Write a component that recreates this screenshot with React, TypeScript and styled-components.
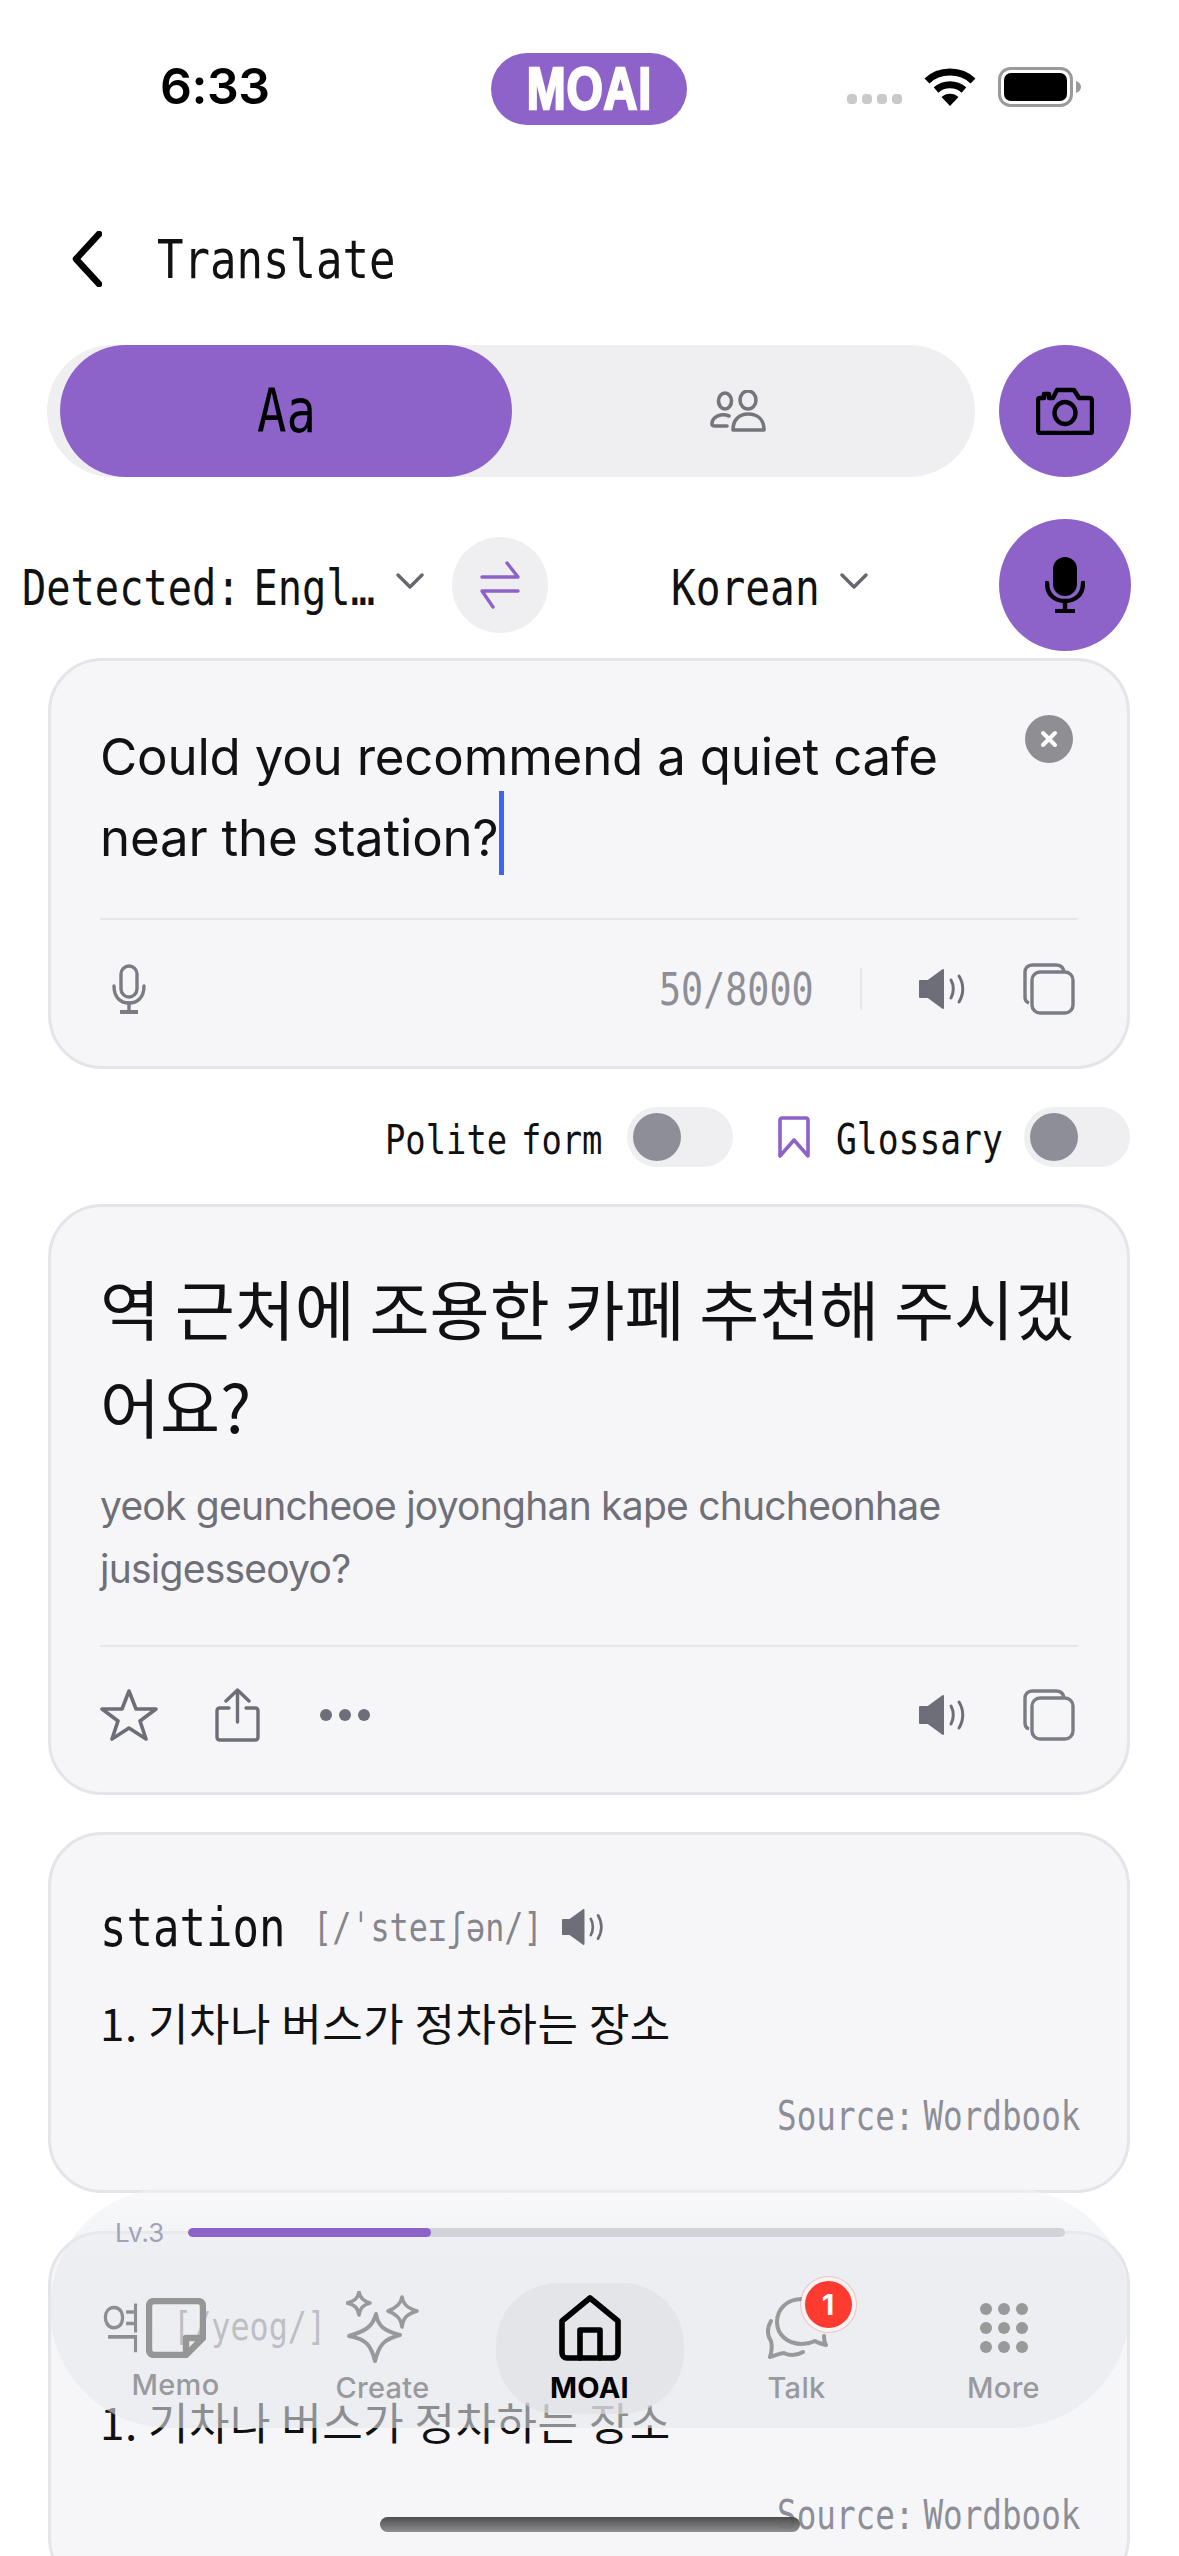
import React from "react";
import styled, { createGlobalStyle } from "styled-components";

const PURPLE = "#8D63C9";
const MONO = `"DejaVu Sans Mono", "Liberation Mono", monospace`;
const SANS = `Inter, "Noto Sans CJK KR", sans-serif`;
const KO = `"Noto Sans CJK KR", sans-serif`;

const Global = createGlobalStyle`
  html, body { margin: 0; padding: 0; background: #fff; }
  * { box-sizing: border-box; }
`;

const Screen = styled.div`
  position: relative;
  width: 1179px;
  height: 2556px;
  overflow: hidden;
  background: #fff;
  font-family: ${SANS};
  color: #111;
`;

const Narrow = styled.span<{ $w: number; $size: number; $color?: string; $space?: number; $down?: number }>`
  display: inline-block;
  flex: none;
  width: ${(p) => p.$w}px;
  margin-top: ${(p) => p.$down ?? 0}px;
  font-family: ${MONO};
  font-size: ${(p) => p.$size}px;
  word-spacing: ${(p) => p.$space ?? 0}px;
  color: ${(p) => p.$color ?? "#111"};
  white-space: nowrap;
  & > span {
    display: inline-block;
    transform: scaleX(0.815);
    transform-origin: left center;
  }
`;

const StatusBar = styled.div`
  height: 178px;
  display: flex;
  align-items: center;
  padding: 0 97px 0 160px;
`;
const Time = styled.span`
  width: 331px;
  font-family: Inter, sans-serif;
  font-weight: 600;
  font-size: 50px;
  letter-spacing: -0.5px;
  color: #000;
  margin-top: -6px;
`;
const LogoPill = styled.div`
  width: 196px;
  height: 72px;
  border-radius: 36px;
  background: ${PURPLE};
  display: flex;
  align-items: center;
  justify-content: center;
`;
const LogoText = styled.span`
  font-family: "Liberation Sans", sans-serif;
  font-weight: 700;
  font-size: 60px;
  line-height: 1;
  letter-spacing: 1px;
  color: #fff;
  -webkit-text-stroke: 2.5px #fff;
  transform: scaleX(0.78);
`;
const StatusRight = styled.div`
  margin-left: auto;
  display: flex;
  align-items: center;
  gap: 22px;
  margin-top: -4px;
`;
const Signal = styled.div`
  display: flex;
  gap: 5px;
  margin-top: 24px;
`;
const SignalDot = styled.i`
  width: 10px;
  height: 10px;
  border-radius: 4px;
  background: #c9c9c9;
`;

const Header = styled.div`
  height: 162px;
  display: flex;
  align-items: center;
  gap: 55px;
  padding-left: 72px;
`;

const TabRow = styled.div`
  margin-top: 5px;
  display: flex;
  gap: 24px;
  padding: 0 48px 0 47px;
`;
const Segment = styled.div`
  flex: 1;
  height: 132px;
  border-radius: 66px;
  background: #efeff1;
  padding-left: 13px;
  display: flex;
`;
const SegmentActive = styled.div`
  width: 452px;
  border-radius: 66px;
  background: ${PURPLE};
  display: flex;
  align-items: center;
  justify-content: center;
`;
const SegmentOther = styled.div`
  flex: 1;
  display: flex;
  align-items: center;
  justify-content: center;
  padding-right: 12px;
`;
const RoundAction = styled.div`
  flex: none;
  width: 132px;
  height: 132px;
  border-radius: 50%;
  background: ${PURPLE};
  display: flex;
  align-items: center;
  justify-content: center;
`;

const LangRow = styled.div`
  margin-top: 42px;
  height: 132px;
  display: flex;
  align-items: center;
  padding: 0 48px 0 22px;
`;
const LangChevron = styled.span<{ $ml: number }>`
  display: flex;
  margin-left: ${(p) => p.$ml}px;
  margin-top: -8px;
`;
const SwapCircle = styled.div`
  width: 96px;
  height: 96px;
  border-radius: 50%;
  background: #efeff1;
  margin-left: 28px;
  margin-right: 123px;
  display: flex;
  align-items: center;
  justify-content: center;
`;
const LangEnd = styled.div`
  margin-left: auto;
`;

const Cards = styled.div`
  padding: 0 49px 0 48px;
`;
const Card = styled.div<{ $mt: number; $pb?: number }>`
  position: relative;
  margin-top: ${(p) => p.$mt}px;
  border: 3px solid #e4e4e9;
  border-radius: 54px;
  background: #f6f6f9;
  padding: 0 49px ${(p) => p.$pb ?? 0}px;
`;
const InputText = styled.div`
  padding-top: 55px;
  width: 900px;
  font-size: 51px;
  letter-spacing: -0.2px;
  line-height: 81px;
  color: #111;
`;
const Caret = styled.i`
  display: inline-block;
  width: 5px;
  height: 84px;
  vertical-align: middle;
  margin: -10px 0 -10px 1px;
  transform: translateY(-9px);
  background: #3b66f0;
`;
const ClearButton = styled.div`
  position: absolute;
  top: 54px;
  right: 54px;
  width: 48px;
  height: 48px;
  border-radius: 50%;
  background: #8e8e93;
  display: flex;
  align-items: center;
  justify-content: center;
`;
const Divider = styled.div<{ $mt: number }>`
  margin-top: ${(p) => p.$mt}px;
  height: 2px;
  background: #e7e7eb;
`;
const ToolRow = styled.div<{ $h: number }>`
  height: ${(p) => p.$h}px;
  display: flex;
  align-items: center;
  padding-right: 3px;
`;
const ToolSlot = styled.span<{ $ml?: number }>`
  display: flex;
  flex: none;
  margin-left: ${(p) => p.$ml ?? 0}px;
`;
const ToolEnd = styled.span`
  margin-left: auto;
  display: flex;
  align-items: center;
`;
const VRule = styled.i`
  width: 2px;
  height: 42px;
  margin-left: 44px;
  background: #e7e7eb;
`;

const ToggleRow = styled.div`
  margin-top: 38px;
  height: 60px;
  display: flex;
  align-items: center;
  justify-content: flex-end;
`;
const Toggle = styled.div<{ $ml: number }>`
  width: 106px;
  height: 60px;
  margin-left: ${(p) => p.$ml}px;
  border-radius: 30px;
  background: #efeff1;
  padding: 6px;
`;
const Thumb = styled.div`
  width: 48px;
  height: 48px;
  border-radius: 50%;
  background: #8e8e98;
`;

const Korean = styled.div`
  padding-top: 51px;
  font-family: ${KO};
  font-size: 65.3px;
  line-height: 98px;
  font-weight: 400;
  color: #111;
  white-space: nowrap;
`;
const Roman = styled.div`
  margin-top: 20px;
  font-size: 39px;
  letter-spacing: -0.76px;
  line-height: 63px;
  color: #6f6f78;
  white-space: nowrap;
`;

const WordRow = styled.div`
  padding-top: 60px;
  height: 124px;
  display: flex;
  align-items: center;
`;
const Definition = styled.div`
  margin-top: 33px;
  height: 60px;
  font-family: ${KO};
  font-size: 44px;
  letter-spacing: 0.5px;
  line-height: 60px;
  color: #111;
  white-space: nowrap;
`;
const SourceLine = styled.div`
  margin-top: 39px;
  height: 50px;
  margin-bottom: 49px;
  line-height: 50px;
  display: flex;
  justify-content: flex-end;
`;

const Nav = styled.nav`
  position: absolute;
  left: 50px;
  top: 2188px;
  width: 1080px;
  height: 240px;
  border-radius: 120px;
  background: linear-gradient(180deg, rgba(244, 244, 246, 0.55), rgba(230, 232, 236, 0.58) 30%);
  padding: 40px 23px 0 22px;
`;
const LevelRow = styled.div`
  display: flex;
  align-items: center;
  height: 9px;
  padding-left: 43px;
  padding-right: 42px;
`;
const LevelLabel = styled.span`
  width: 73px;
  flex: none;
  font-size: 26px;
  color: #a0a3b4;
`;
const Track = styled.div`
  flex: 1;
  height: 9px;
  border-radius: 5px;
  background: #d2d2d9;
  overflow: hidden;
`;
const Fill = styled.div`
  height: 100%;
  border-radius: 5px;
  background: ${PURPLE};
`;
const NavItems = styled.div`
  margin-top: 46px;
  display: grid;
  grid-template-columns: repeat(5, 1fr);
`;
const NavItem = styled.div<{ $active?: boolean }>`
  position: relative;
  justify-self: center;
  width: 188px;
  height: 131px;
  padding-top: 5px;
  border-radius: 62px;
  background: ${(p) => (p.$active ? "rgba(222, 223, 228, 0.62)" : "transparent")};
  display: flex;
  flex-direction: column;
  align-items: center;
`;
const NavIcon = styled.div`
  position: relative;
  height: 80px;
  display: flex;
  align-items: center;
  justify-content: center;
`;
const NavLabel = styled.span<{ $active?: boolean; $up?: number }>`
  height: 40px;
  line-height: 40px;
  margin-top: ${(p) => -(p.$up ?? 0)}px;
  font-size: 29px;
  letter-spacing: 0.3px;
  font-weight: ${(p) => (p.$active ? 700 : 500)};
  color: ${(p) => (p.$active ? "#000" : "#999a9d")};
`;
const Badge = styled.span`
  position: absolute;
  top: -7px;
  left: 39px;
  width: 47px;
  height: 47px;
  border-radius: 50%;
  background: #ff3b30;
  box-shadow: 0 0 0 4px #f4f4f6, 0 0 0 5px rgba(255, 59, 48, 0.25);
  color: #fff;
  font-size: 29px;
  font-weight: 700;
  display: flex;
  align-items: center;
  justify-content: center;
`;
const HomeBar = styled.div`
  position: absolute;
  left: 380px;
  top: 2517px;
  width: 420px;
  height: 15px;
  border-radius: 8px;
  background: linear-gradient(180deg, #444, #8a8a8a);
  opacity: 0.95;
`;

type TProps = { w: number; size: number; color?: string; space?: number; down?: number; children: React.ReactNode };
const T = ({ w, size, color, space, down, children }: TProps) => (
  <Narrow $w={w} $size={size} $color={color} $space={space} $down={down}>
    <span>{children}</span>
  </Narrow>
);

const Wifi = () => (
  <svg width="52" height="40" viewBox="0 0 52 40" fill="none" stroke="#000" strokeWidth="7">
    <path d="M3 14C15 2 37 2 49 14" />
    <path d="M12 23C20 16 32 16 40 23" />
    <path d="M26 39L17.5 30C22 25.5 30 25.5 34.5 30Z" fill="#000" stroke="none" />
  </svg>
);
const Battery = () => (
  <svg width="84" height="40" viewBox="0 0 84 40" fill="none">
    <rect x="1.5" y="1.5" width="72" height="37" rx="11" stroke="#9a9a9a" strokeWidth="3" />
    <rect x="6" y="6" width="63" height="28" rx="7" fill="#000" />
    <path d="M78 14c3 1 5 3 5 6s-2 5-5 6z" fill="#9a9a9a" />
  </svg>
);
const Back = () => (
  <svg width="30" height="56" viewBox="0 0 30 56" fill="none" stroke="#000" strokeWidth="6.5" strokeLinecap="round" strokeLinejoin="round">
    <path d="M27 3L4 28L27 53" />
  </svg>
);
const People = () => (
  <svg width="58" height="42" viewBox="0 0 58 42" fill="none" stroke="#75757d" strokeWidth="3.6" strokeLinecap="round" strokeLinejoin="round">
    <ellipse cx="16" cy="11" rx="6.5" ry="8" />
    <ellipse cx="39" cy="10" rx="8" ry="9" />
    <path d="M24 40C24 30 30 24 39 24C49 24 55 30 55 40Z" />
    <path d="M20 26C13 23 3 26 3 34C3 36 4 36 6 36H18" />
  </svg>
);
const Camera = () => (
  <svg width="58" height="48" viewBox="0 0 58 48" fill="none" stroke="#000" strokeWidth="4.4" strokeLinecap="round" strokeLinejoin="round">
    <path d="M4 46H54C55.5 46 56 45 56 44V14C56 12 55 11 53 11H43L38 3H21L17 11H13V7H8V11H4C3 11 2 12 2 14V44C2 45 3 46 4 46Z" />
    <ellipse cx="29" cy="26" rx="10.5" ry="11" />
  </svg>
);
const MicSolid = () => (
  <svg width="40" height="56" viewBox="0 0 40 56" fill="none" stroke="#000" strokeWidth="4.4" strokeLinecap="round">
    <rect x="8" y="0" width="24" height="39" rx="12" fill="#000" stroke="none" />
    <path d="M2 26C2 38 10 44 20 44C30 44 38 38 38 26" />
    <path d="M20 44V53" />
    <path d="M10 54H30" strokeLinecap="butt" strokeWidth="4" />
  </svg>
);
const Swap = () => (
  <svg width="40" height="48" viewBox="0 0 40 48" fill="none" stroke="#8D63C9" strokeWidth="3.4" strokeLinecap="round" strokeLinejoin="round">
    <path d="M2 16H38L27 2" />
    <path d="M38 30H2L13 46" />
  </svg>
);
const Chevron = () => (
  <svg width="28" height="16" viewBox="0 0 28 16" fill="none" stroke="#67676f" strokeWidth="3.4" strokeLinecap="round" strokeLinejoin="round">
    <path d="M2 2L14 14L26 2" />
  </svg>
);
const Close = () => (
  <svg width="20" height="20" viewBox="0 0 20 20" fill="none" stroke="#fff" strokeWidth="4" strokeLinecap="round">
    <path d="M4 4L16 16M16 4L4 16" />
  </svg>
);
const MicLine = () => (
  <svg width="34" height="50" viewBox="0 0 34 50" fill="none" stroke="#7b7b84" strokeWidth="3.4" strokeLinecap="round">
    <rect x="9" y="2" width="16" height="31" rx="8" />
    <path d="M2 22C2 34 9 39 17 39C25 39 32 34 32 22" />
    <path d="M17 39V47" />
    <path d="M8 48H26" strokeWidth="4" strokeLinecap="butt" />
  </svg>
);
const Speaker = ({ scale = 1 }: { scale?: number }) => (
  <svg width={48 * scale} height={40 * scale} viewBox="0 0 48 40" fill="none">
    <path d="M1 12H9L24 1V39L9 28H1Z" fill="#6e6e78" stroke="#6e6e78" strokeWidth="2" strokeLinejoin="round" />
    <path d="M32 11C35 16 35 24 32 29" stroke="#6e6e78" strokeWidth="3" strokeLinecap="round" />
    <path d="M40 7C45 15 45 25 40 33" stroke="#6e6e78" strokeWidth="3" strokeLinecap="round" />
  </svg>
);
const Copy = () => (
  <svg width="52" height="52" viewBox="0 0 52 52" fill="none" stroke="#7b7b84" strokeWidth="3.4" strokeLinejoin="round">
    <path d="M6 40C3 39 2 37 2 34V9C2 5 5 2 9 2H33C37 2 40 4 41 8" />
    <rect x="9" y="9" width="41" height="41" rx="8" />
  </svg>
);
const Bookmark = () => (
  <svg width="32" height="42" viewBox="0 0 32 42" fill="none" stroke="#8D63C9" strokeWidth="3.6" strokeLinejoin="round">
    <path d="M2 40V4C2 3 3 2 4 2H28C29 2 30 3 30 4V40L16 24Z" />
  </svg>
);
const Star = () => (
  <svg width="58" height="54" viewBox="0 0 58 54" fill="none" stroke="#6e6e78" strokeWidth="3.6" strokeLinejoin="round">
    <path d="M29 3L36 21L56 21L40 33L46 51L29 40L12 51L18 33L2 21L22 21Z" />
  </svg>
);
const Share = () => (
  <svg width="45" height="54" viewBox="0 0 45 54" fill="none" stroke="#6e6e78" strokeWidth="3.4" strokeLinecap="round" strokeLinejoin="round">
    <path d="M22.5 34V2M11 13L22.5 2L34 13" />
    <path d="M14 20H5C3 20 2 21 2 23V49C2 51 3 52 5 52H40C42 52 43 51 43 49V23C43 21 42 20 40 20H31" />
  </svg>
);
const Dots = () => (
  <svg width="50" height="14" viewBox="0 0 50 14" fill="#6e6e78">
    <circle cx="6" cy="7" r="6" />
    <circle cx="25" cy="7" r="6" />
    <circle cx="44" cy="7" r="6" />
  </svg>
);
const Memo = () => (
  <svg width="60" height="60" viewBox="0 0 60 60" fill="none" stroke="#969696" strokeWidth="6.4" strokeLinejoin="round">
    <path d="M8 3H52C55 3 57 5 57 8V40L40 57H8C5 57 3 55 3 52V8C3 5 5 3 8 3Z" />
    <path d="M57 40H40V57" />
  </svg>
);
const Sparkles = () => (
  <svg width="74" height="74" viewBox="0 0 74 74" fill="none" stroke="#999" strokeWidth="3.6" strokeLinejoin="round">
    <path d="M30 23C32 35 38 40 54 44C38 48 33 54 29 70C25 54 20 48 3 45C20 40 27 35 30 23Z" strokeWidth="4" />
    <path d="M13 1C14 7 17 10 24 12C17 14 14 17 13 24C12 17 9 14 1 12C9 10 12 7 13 1Z" />
    <path d="M56 6C57 13 61 17 71 20C61 23 57 27 56 36C55 27 50 23 42 20C50 17 55 13 56 6Z" />
  </svg>
);
const Home = () => (
  <svg width="62" height="66" viewBox="0 0 62 66" fill="none" stroke="#000" strokeWidth="5.6" strokeLinecap="round" strokeLinejoin="round">
    <path d="M31 3L59 26V58C59 61 57 63 54 63H8C5 63 3 61 3 58V26Z" />
    <path d="M21 63V35H41V63" />
  </svg>
);
const Talk = () => (
  <svg width="62" height="62" viewBox="0 0 62 62" fill="none" stroke="#999" strokeWidth="4" strokeLinecap="round" strokeLinejoin="round">
    <path d="M36 2C20 2 11 13 11 25C11 38 22 47 36 47C41 47 45 46 49 44C52 46 56 47 60 48C58 45 58 42 58 39" />
    <path d="M5 24C1 31 1 38 5 44C6 48 6 54 4 60C9 59 14 56 18 56C24 59 30 59 37 55" />
  </svg>
);
const Grid = () => (
  <svg width="48" height="50" viewBox="0 0 48 50" fill="#999">
    {[6, 25, 44].map((y) => [6, 24, 42].map((x) => <circle key={`${x}-${y}`} cx={x} cy={y} r="6" />))}
  </svg>
);

type WordCardProps = { mt: number; word: string; w: number; ipa: string; ipaW: number; speaker: boolean; definition: string };
const WordCard = ({ mt, word, w, ipa, ipaW, speaker, definition }: WordCardProps) => (
  <Card $mt={mt}>
    <WordRow>
      <T w={w} size={54}>{word}</T>
      <ToolSlot $ml={26}><T w={ipaW} size={39} color="#85858d">{ipa}</T></ToolSlot>
      {speaker && <ToolSlot $ml={39}><Speaker scale={0.9} /></ToolSlot>}
    </WordRow>
    <Definition>{definition}</Definition>
    <SourceLine><T w={301} size={40} space={-13} color="#8e8e96">Source: Wordbook</T></SourceLine>
  </Card>
);

export default function App() {
  return (
    <Screen>
      <Global />
      <StatusBar>
        <Time>6:33</Time>
        <LogoPill><LogoText>MOAI</LogoText></LogoPill>
        <StatusRight>
          <Signal>
            <SignalDot /><SignalDot /><SignalDot /><SignalDot />
          </Signal>
          <Wifi />
          <Battery />
        </StatusRight>
      </StatusBar>
      <Header>
        <Back />
        <T w={240} size={54}>Translate</T>
      </Header>
      <TabRow>
        <Segment>
          <SegmentActive><T w={58} size={60} color="#000">Aa</T></SegmentActive>
          <SegmentOther><People /></SegmentOther>
        </Segment>
        <RoundAction><Camera /></RoundAction>
      </TabRow>
      <LangRow>
        <T w={352} size={49.5} space={-14} down={5}>Detected: Engl…</T>
        <LangChevron $ml={22}><Chevron /></LangChevron>
        <SwapCircle><Swap /></SwapCircle>
        <T w={149} size={50.5} down={5}>Korean</T>
        <LangChevron $ml={20}><Chevron /></LangChevron>
        <LangEnd><RoundAction><MicSolid /></RoundAction></LangEnd>
      </LangRow>
      <Cards>
        <Card $mt={7} $pb={8}>
          <InputText>
            Could you recommend a quiet cafe near the station?<Caret />
          </InputText>
          <ClearButton><Close /></ClearButton>
          <Divider $mt={40} />
          <ToolRow $h={138}>
            <ToolSlot $ml={12}><MicLine /></ToolSlot>
            <ToolEnd>
              <T w={157} size={45} color="#8e8e96">50/8000</T>
              <VRule />
              <ToolSlot $ml={57}><Speaker /></ToolSlot>
              <ToolSlot $ml={56}><Copy /></ToolSlot>
            </ToolEnd>
          </ToolRow>
        </Card>
        <ToggleRow>
          <T w={220} size={41.5} space={-8} down={5}>Polite form</T>
          <Toggle $ml={22}><Thumb /></Toggle>
          <ToolSlot $ml={45}><Bookmark /></ToolSlot>
          <ToolSlot $ml={26}><T w={167} size={42.5} down={5}>Glossary</T></ToolSlot>
          <Toggle $ml={21}><Thumb /></Toggle>
        </ToggleRow>
        <Card $mt={37} $pb={9}>
          <Korean>역 근처에 조용한 카페 추천해 주시겠<br />어요?</Korean>
          <Roman>yeok geuncheoe joyonghan kape chucheonhae<br />jusigesseoyo?</Roman>
          <Divider $mt={45} />
          <ToolRow $h={136}>
            <Star />
            <ToolSlot $ml={57}><Share /></ToolSlot>
            <ToolSlot $ml={60}><Dots /></ToolSlot>
            <ToolEnd>
              <ToolSlot><Speaker /></ToolSlot>
              <ToolSlot $ml={56}><Copy /></ToolSlot>
            </ToolEnd>
          </ToolRow>
        </Card>
        <WordCard mt={37} word="station" w={187} ipa="[/ˈsteɪʃən/]" ipaW={210} speaker definition="1. 기차나 버스가 정차하는 장소" />
        <WordCard mt={38} word="역" w={47} ipa="[/yeog/]" ipaW={160} speaker={false} definition="1. 기차나 버스가 정차하는 장소" />
      </Cards>
      <Nav>
        <LevelRow>
          <LevelLabel>Lv.3</LevelLabel>
          <Track><Fill style={{ width: `${(243 / 877) * 100}%` }} /></Track>
        </LevelRow>
        <NavItems>
          <NavItem>
            <NavIcon><Memo /></NavIcon>
            <NavLabel $up={3}>Memo</NavLabel>
          </NavItem>
          <NavItem>
            <NavIcon><Sparkles /></NavIcon>
            <NavLabel>Create</NavLabel>
          </NavItem>
          <NavItem $active>
            <NavIcon><Home /></NavIcon>
            <NavLabel $active>MOAI</NavLabel>
          </NavItem>
          <NavItem>
            <NavIcon><Talk /><Badge>1</Badge></NavIcon>
            <NavLabel>Talk</NavLabel>
          </NavItem>
          <NavItem>
            <NavIcon><Grid /></NavIcon>
            <NavLabel>More</NavLabel>
          </NavItem>
        </NavItems>
      </Nav>
      <HomeBar />
    </Screen>
  );
}
